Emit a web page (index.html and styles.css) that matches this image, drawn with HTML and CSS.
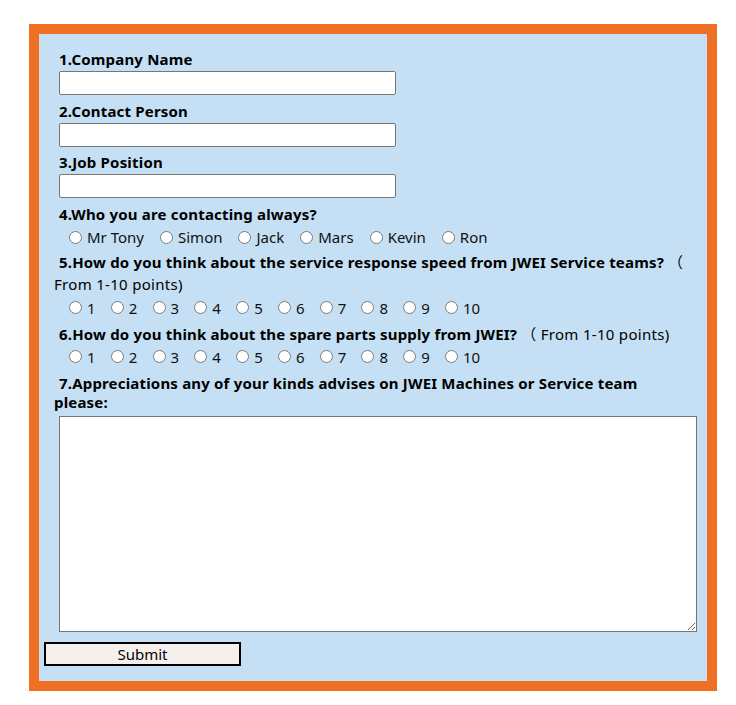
FILE: index.html
```html
<!DOCTYPE html>
<html lang="en">
<head>
<meta charset="utf-8">
<title>JWEI Service Survey</title>
<link rel="stylesheet" href="styles.css">
</head>
<body>
<div class="frame">
  <form class="survey" onsubmit="return false">
    <div class="field">
      <label class="q" for="company">1.Company Name</label>
      <input class="text" id="company" type="text">
    </div>
    <div class="field gap-text">
      <label class="q" for="contact">2.Contact Person</label>
      <input class="text" id="contact" type="text">
    </div>
    <div class="field gap-text">
      <label class="q" for="job">3.Job Position</label>
      <input class="text" id="job" type="text">
    </div>
    <div class="field gap-text">
      <div class="q">4.Who you are contacting always?</div>
      <div class="opts names row-a">
        <label class="opt"><input type="radio" name="contacting"><span>Mr Tony</span></label>
        <label class="opt"><input type="radio" name="contacting"><span>Simon</span></label>
        <label class="opt"><input type="radio" name="contacting"><span>Jack</span></label>
        <label class="opt"><input type="radio" name="contacting"><span>Mars</span></label>
        <label class="opt"><input type="radio" name="contacting"><span>Kevin</span></label>
        <label class="opt"><input type="radio" name="contacting"><span>Ron</span></label>
      </div>
    </div>
    <div class="field gap-5">
      <div class="q q5"><span>5.How do you think about the service response speed from JWEI Service teams?</span> <span class="note">（</span> <span class="note">From 1-10 points)</span></div>
      <div class="opts nums row-b">
        <label class="opt"><input type="radio" name="speed"><span>1</span></label>
        <label class="opt"><input type="radio" name="speed"><span>2</span></label>
        <label class="opt"><input type="radio" name="speed"><span>3</span></label>
        <label class="opt"><input type="radio" name="speed"><span>4</span></label>
        <label class="opt"><input type="radio" name="speed"><span>5</span></label>
        <label class="opt"><input type="radio" name="speed"><span>6</span></label>
        <label class="opt"><input type="radio" name="speed"><span>7</span></label>
        <label class="opt"><input type="radio" name="speed"><span>8</span></label>
        <label class="opt"><input type="radio" name="speed"><span>9</span></label>
        <label class="opt"><input type="radio" name="speed"><span>10</span></label>
      </div>
    </div>
    <div class="field gap-6">
      <div class="q"><span>6.How do you think about the spare parts supply from JWEI?</span> <span class="note">（</span> <span class="note">From 1-10 points)</span></div>
      <div class="opts nums row-c">
        <label class="opt"><input type="radio" name="parts"><span>1</span></label>
        <label class="opt"><input type="radio" name="parts"><span>2</span></label>
        <label class="opt"><input type="radio" name="parts"><span>3</span></label>
        <label class="opt"><input type="radio" name="parts"><span>4</span></label>
        <label class="opt"><input type="radio" name="parts"><span>5</span></label>
        <label class="opt"><input type="radio" name="parts"><span>6</span></label>
        <label class="opt"><input type="radio" name="parts"><span>7</span></label>
        <label class="opt"><input type="radio" name="parts"><span>8</span></label>
        <label class="opt"><input type="radio" name="parts"><span>9</span></label>
        <label class="opt"><input type="radio" name="parts"><span>10</span></label>
      </div>
    </div>
    <div class="field gap-7">
      <label class="q q7" for="advice">7.Appreciations any of your kinds advises on JWEI Machines or Service team please:</label>
      <textarea class="advice" id="advice"></textarea>
    </div>
    <button class="submit" type="submit">Submit</button>
  </form>
</div>
</body>
</html>
```

FILE: styles.css
```css
* {
  box-sizing: border-box;
}

body {
  margin: 0;
  background: #ffffff;
  color: #000000;
  font-family: "Noto Sans", "Noto Sans CJK SC", sans-serif;
  font-size: 15px;
}

.frame {
  margin: 24px 0 0 29px;
  width: 688px;
  height: 667px;
  border: 10px solid #ef7022;
  background: #c5e0f4;
}

.survey {
  display: flex;
  flex-direction: column;
  align-items: flex-start;
  padding: 15px 20px 0 5px;
}

.field {
  width: 100%;
  padding-left: 10px;
  display: flex;
  flex-direction: column;
  align-items: flex-start;
}

.gap-text { margin-top: 5.5px; }
.gap-5 { margin-top: 5.3px; }
.gap-6 { margin-top: 6.2px; }
.gap-7 { margin-top: 6.8px; }

.q {
  display: block;
  font-weight: 700;
  line-height: 20px;
  letter-spacing: 0.18px;
  text-indent: 5px;
}

.q5 {
  line-height: 21.5px;
}

.q7 {
  line-height: 19.4px;
}

.note {
  font-weight: 400;
  letter-spacing: 0.3px;
}

.text {
  margin: 2px 0 0 5px;
  width: 337px;
  height: 24px;
  padding: 1px 2px;
  border: 1px solid #767676;
  border-radius: 2px;
  background: #ffffff;
  font: inherit;
}

.opts {
  display: flex;
  align-items: center;
  height: 20px;
  padding-left: 15px;
}

.names { gap: 16px; }
.nums { gap: 15.2px; }

.row-a { margin-top: 3.6px; }
.row-b { margin-top: 2.6px; }
.row-c { margin-top: 2.8px; }

.opt {
  display: flex;
  align-items: center;
  gap: 5px;
  line-height: 20px;
  color: #111111;
}

.opt input {
  margin: 0;
  width: 13px;
  height: 13px;
}

.advice {
  margin: 3.1px 0 0 5px;
  width: 638px;
  height: 216px;
  border: 1px solid #767676;
  background: #ffffff;
}

.submit {
  margin-top: 10.3px;
  width: 197px;
  height: 24px;
  padding: 0;
  border: 2px solid #000000;
  border-radius: 0;
  background: #f6f0ec;
  color: #000000;
  font: inherit;
  font-size: 15px;
  line-height: 20px;
}
```
